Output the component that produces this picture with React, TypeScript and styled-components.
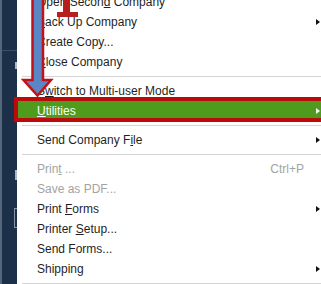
import React from "react";
import styled, { createGlobalStyle } from "styled-components";

const GlobalStyle = createGlobalStyle`
  html, body {
    margin: 0;
    padding: 0;
    background: #fff;
  }
  body {
    width: 321px;
    height: 284px;
    overflow: hidden;
    font-family: "Liberation Sans", Arial, sans-serif;
  }
`;

const Screen = styled.div`
  position: relative;
  display: flex;
  width: 321px;
  height: 284px;
  overflow: hidden;
  background: #fff;
`;

/* dark app frame peeking out on the left */
const Sidebar = styled.div`
  flex: 0 0 17px;
  display: flex;
  flex-direction: column;
  align-items: flex-end;
  box-sizing: border-box;
  background: #1c3049;
  border-left: 2px solid #56667a;
`;

const FrameLine = styled.div`
  align-self: stretch;
  height: 1px;
  margin-top: 50px;
  background: #3a4f6c;
`;

const Nub = styled.div<{ $top: number; $h: number }>`
  width: 2px;
  height: ${(p) => p.$h}px;
  margin-top: ${(p) => p.$top}px;
  background: #aeb7c2;
`;

const NubOutline = styled.div`
  width: 2px;
  height: 18px;
  margin-top: 28px;
  border: 1px solid #8794a5;
  border-right: none;
`;

const Menu = styled.ul`
  flex: 1;
  margin: -8px 0 0;
  padding: 0;
  list-style: none;
  font-size: 12px;
  color: #1f1f1f;
`;

const Item = styled.li<{ $disabled?: boolean; $active?: boolean }>`
  position: relative;
  display: grid;
  grid-template-columns: 1fr auto 17px;
  align-items: center;
  height: 20px;
  padding-left: 20px;
  line-height: 20px;
  white-space: nowrap;
  color: ${(p) => (p.$active ? "#fff" : p.$disabled ? "#a3a3a3" : "#1f1f1f")};
  background: ${(p) => (p.$active ? "#4f9b1e" : "transparent")};

  ${(p) =>
    p.$active &&
    `
    &::after {
      content: "";
      position: absolute;
      top: -4px;
      bottom: -1px;
      left: -3px;
      right: -10px;
      border: 4px solid #ba0a0a;
    }
  `}
`;

const Shortcut = styled.span`
  color: #a3a3a3;
`;

const SubArrow = styled.span<{ $light?: boolean }>`
  justify-self: start;
  margin-left: 12px;
  width: 0;
  height: 0;
  border-left: 4px solid ${(p) => (p.$light ? "#fff" : "#111")};
  border-top: 3.5px solid transparent;
  border-bottom: 3.5px solid transparent;
`;

const Separator = styled.li`
  height: 9px;
  padding-top: 4px;
  box-sizing: border-box;

  &::before {
    content: "";
    display: block;
    height: 1px;
    margin-left: 5px;
    background: #d5d5d5;
  }
`;

/* tutorial annotations drawn over the menu */
const Overlay = styled.svg`
  position: absolute;
  left: 0;
  top: 0;
  pointer-events: none;
`;

type Entry =
  | { sep: true }
  | {
      sep?: false;
      label: React.ReactNode;
      sub?: boolean;
      disabled?: boolean;
      active?: boolean;
      shortcut?: string;
    };

const entries: Entry[] = [
  { label: <>Open Secon<u>d</u> Company</> },
  { label: <><u>B</u>ack Up Company</>, sub: true },
  { label: <>Create Copy...</> },
  { label: <><u>C</u>lose Company</> },
  { sep: true },
  { label: <>S<u>w</u>itch to Multi-user Mode</> },
  { label: <><u>U</u>tilities</>, sub: true, active: true },
  { sep: true },
  { label: <>Send Company F<u>i</u>le</>, sub: true },
  { sep: true },
  { label: <>Prin<u>t</u> ...</>, disabled: true, shortcut: "Ctrl+P" },
  { label: <>Save as PDF...</>, disabled: true },
  { label: <>Print <u>F</u>orms</>, sub: true },
  { label: <>Printer <u>S</u>etup...</> },
  { label: <>Send Forms...</> },
  { label: <>Shippin<u>g</u></>, sub: true },
  { sep: true },
];

const App = () => {
  return (
    <Screen>
      <GlobalStyle />
      <Sidebar>
        <FrameLine />
        <Nub $top={11} $h={7} />
        <Nub $top={101} $h={10} />
        <NubOutline />
      </Sidebar>

      <Menu>
        {entries.map((e, i) =>
          e.sep ? (
            <Separator key={i} />
          ) : (
            <Item key={i} $disabled={e.disabled} $active={e.active}>
              <span>{e.label}</span>
              {e.shortcut ? <Shortcut>{e.shortcut}</Shortcut> : <span />}
              {e.sub ? <SubArrow $light={e.active} /> : <span />}
            </Item>
          )
        )}
      </Menu>

      <Overlay width="90" height="100" viewBox="0 0 90 100">
        <path
          d="M32.5 -5 H43 V80 H51 L37.5 95.5 L23.5 80 H32.5 Z"
          fill="#5b86c6"
          stroke="#c0121a"
          strokeWidth="2.5"
          strokeLinejoin="miter"
        />
        <path d="M63 -3 H70 V12 H78 V17 H57 V12 H63 Z" fill="#b5201f" />
      </Overlay>
    </Screen>
  );
};

export default App;
